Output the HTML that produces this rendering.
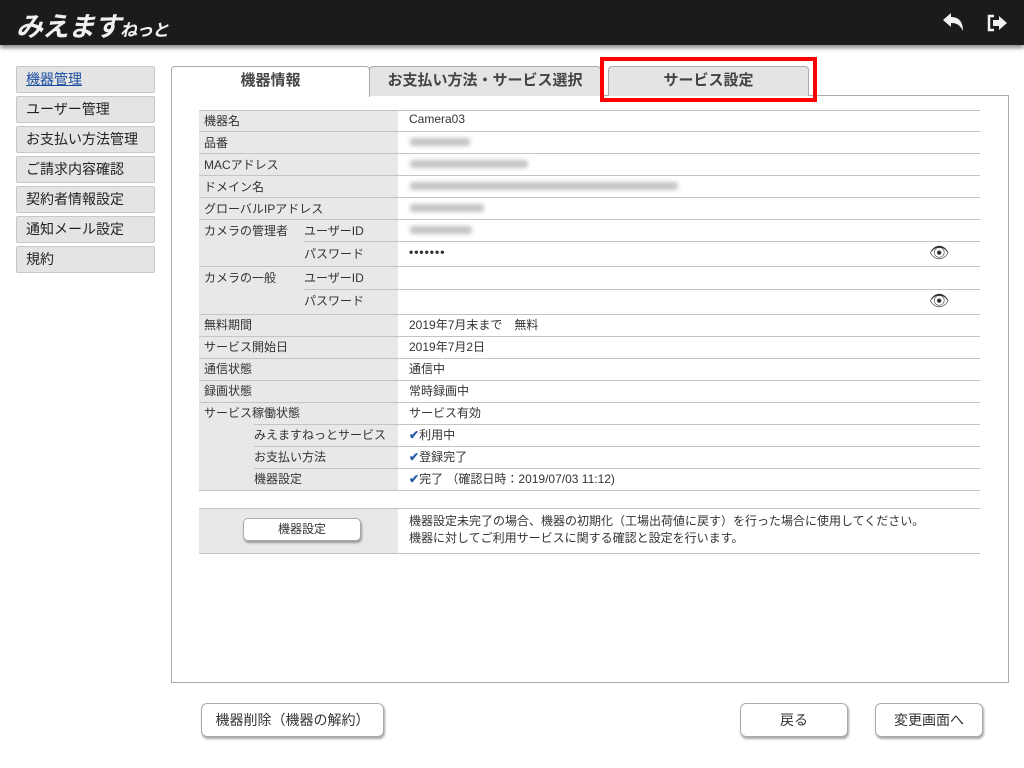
<!DOCTYPE html>
<html><head><meta charset="utf-8"><style>
*{margin:0;padding:0;box-sizing:border-box}
body{width:1024px;height:768px;background:#fff;font-family:"Liberation Sans","Noto Sans CJK JP",sans-serif;font-size:12px;color:#333;position:relative;overflow:hidden}
.hdr{position:absolute;left:0;top:0;width:1024px;height:45px;background:#1c1b1b;box-shadow:0 3px 4px rgba(0,0,0,.45)}
.logo{position:absolute;left:16px;top:5px;color:#f0f0f0;font-size:27px;font-style:italic;font-weight:bold;letter-spacing:-1px}
.logo small{font-size:17px}
.side{position:absolute;left:16px;width:139px;height:27px;background:#e4e4e4;border:1px solid #c8c8c8;border-radius:2px;font-size:14px;line-height:24px;padding-left:9px;color:#222}
.tab{position:absolute;top:66px;height:30px;border:1px solid #aaa;border-bottom:none;border-radius:4px 4px 0 0;font-size:15px;font-weight:bold;text-align:center;line-height:27px;color:#444}
.panel{position:absolute;left:171px;top:95px;width:838px;height:588px;border:1px solid #aaa}
.row{position:absolute;left:199px;width:781px;border-top:1px solid #c4c4c4}
.lab{position:absolute;left:199px;width:199px;background:#e8e8e8}
.t{position:absolute;font-size:12px;color:#333;white-space:nowrap;margin-top:-1px}
.blur{position:absolute;height:8px;background:#c4c4c4;filter:blur(2px);border-radius:3px}
.btn{position:absolute;background:#fff;border:1px solid #aaa;border-radius:6px;box-shadow:1px 2px 2px rgba(0,0,0,.35);text-align:center;font-size:14px;color:#333}
.chk{color:#2a5ea8;font-weight:bold}
</style></head><body>
<div class="hdr"><div class="logo">みえます<small>ねっと</small></div>
<svg style="position:absolute;left:941px;top:11px" width="26" height="24" viewBox="0 0 26 24"><path d="M2 9 L10 2 L10 6 C18 6 22 11 22 20 C19 14 16 12 10 12 L10 16 Z" fill="#f2f2f2"/></svg>
<svg style="position:absolute;left:987px;top:14px" width="22" height="18" viewBox="0 0 22 18"><path d="M7 2 H2 V16 H7" stroke="#f2f2f2" stroke-width="2.5" fill="none"/><path d="M6 6 H12 V2 L20 9 L12 16 V12 H6 Z" fill="#f2f2f2"/></svg>
</div>
<div class="side" style="top:66px;color:#1a4fa0;text-decoration:underline">機器管理</div>
<div class="side" style="top:96px">ユーザー管理</div>
<div class="side" style="top:126px">お支払い方法管理</div>
<div class="side" style="top:156px">ご請求内容確認</div>
<div class="side" style="top:186px">契約者情報設定</div>
<div class="side" style="top:216px">通知メール設定</div>
<div class="side" style="top:246px">規約</div>
<div class="panel"></div>
<div class="tab" style="left:171px;width:199px;background:#fff;height:31px;z-index:2">機器情報</div>
<div class="tab" style="left:369px;width:232px;background:#e4e4e4">お支払い方法・サービス選択</div>
<div class="tab" style="left:608px;width:201px;background:#e4e4e4">サービス設定</div>
<div style="position:absolute;left:600px;top:57px;width:217px;height:45px;border:4px solid #f00;z-index:3"></div>

<div class="lab" style="top:110px;height:380px"></div>
<div class="row" style="top:110px"></div><div class="row" style="top:131px"></div><div class="row" style="top:153px"></div><div class="row" style="top:175px"></div><div class="row" style="top:197px"></div><div class="row" style="top:219px"></div>
<div class="row" style="top:241px;left:304px;width:676px"></div><div class="row" style="top:266px"></div><div class="row" style="top:289px;left:304px;width:676px"></div><div class="row" style="top:314px"></div><div class="row" style="top:336px"></div><div class="row" style="top:358px"></div><div class="row" style="top:380px"></div><div class="row" style="top:402px"></div>
<div class="row" style="top:424px;left:254px;width:726px"></div><div class="row" style="top:446px;left:254px;width:726px"></div><div class="row" style="top:468px;left:254px;width:726px"></div><div class="row" style="top:490px"></div>

<div class="t" style="left:204px;top:113px">機器名</div><div class="t" style="left:409px;top:113px">Camera03</div>
<div class="t" style="left:204px;top:135px">品番</div><div class="blur" style="left:410px;top:138px;width:60px"></div>
<div class="t" style="left:204px;top:157px">MACアドレス</div><div class="blur" style="left:410px;top:160px;width:118px"></div>
<div class="t" style="left:204px;top:179px">ドメイン名</div><div class="blur" style="left:410px;top:182px;width:268px"></div>
<div class="t" style="left:204px;top:201px">グローバルIPアドレス</div><div class="blur" style="left:410px;top:204px;width:74px"></div>
<div class="t" style="left:204px;top:223px">カメラの管理者</div><div class="t" style="left:304px;top:223px">ユーザーID</div><div class="blur" style="left:410px;top:226px;width:62px"></div>
<div class="t" style="left:304px;top:246px">パスワード</div><div class="t" style="left:409px;top:246px;letter-spacing:1px;font-weight:bold">•••••••</div>
<div class="t" style="left:204px;top:270px">カメラの一般</div><div class="t" style="left:304px;top:270px">ユーザーID</div>
<div class="t" style="left:304px;top:293px">パスワード</div>
<div class="t" style="left:929px;top:244px;font-size:16px">👁</div><div class="t" style="left:929px;top:292px;font-size:16px">👁</div>
<div class="t" style="left:204px;top:317px">無料期間</div><div class="t" style="left:409px;top:317px">2019年7月末まで　無料</div>
<div class="t" style="left:204px;top:339px">サービス開始日</div><div class="t" style="left:409px;top:339px">2019年7月2日</div>
<div class="t" style="left:204px;top:361px">通信状態</div><div class="t" style="left:409px;top:361px">通信中</div>
<div class="t" style="left:204px;top:383px">録画状態</div><div class="t" style="left:409px;top:383px">常時録画中</div>
<div class="t" style="left:204px;top:405px">サービス稼働状態</div><div class="t" style="left:409px;top:405px">サービス有効</div>
<div class="t" style="left:254px;top:427px">みえますねっとサービス</div><div class="t" style="left:409px;top:427px"><span class="chk">✔</span>利用中</div>
<div class="t" style="left:254px;top:449px">お支払い方法</div><div class="t" style="left:409px;top:449px"><span class="chk">✔</span>登録完了</div>
<div class="t" style="left:254px;top:471px">機器設定</div><div class="t" style="left:409px;top:471px"><span class="chk">✔</span>完了 （確認日時：2019/07/03 11:12)</div>

<div class="lab" style="top:508px;height:45px"></div>
<div class="row" style="top:508px"></div><div class="row" style="top:553px"></div>
<div class="btn" style="left:243px;top:518px;width:118px;height:23px;font-size:12px;line-height:21px;border-radius:5px">機器設定</div>
<div class="t" style="left:409px;top:514px;line-height:17px">機器設定未完了の場合、機器の初期化（工場出荷値に戻す）を行った場合に使用してください。<br>機器に対してご利用サービスに関する確認と設定を行います。</div>

<div class="btn" style="left:201px;top:703px;width:183px;height:34px;line-height:32px">機器削除（機器の解約）</div>
<div class="btn" style="left:740px;top:703px;width:108px;height:34px;line-height:32px">戻る</div>
<div class="btn" style="left:875px;top:703px;width:108px;height:34px;line-height:32px">変更画面へ</div>
</body></html>
